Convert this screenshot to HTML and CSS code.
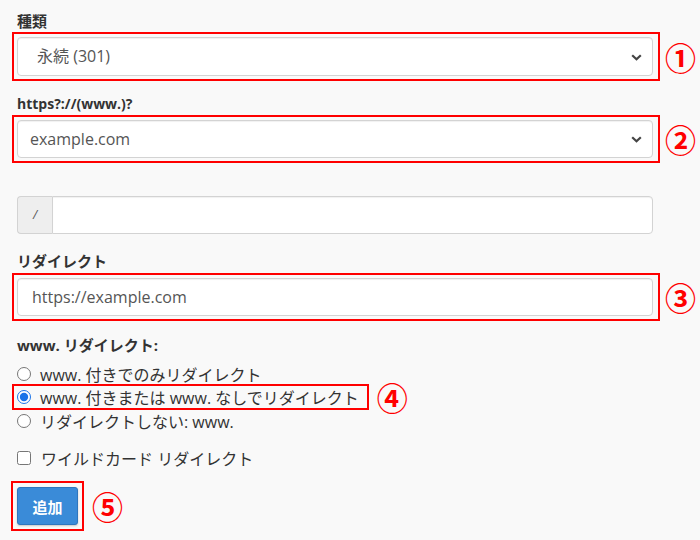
FILE: index.html
```html
<!DOCTYPE html>
<html lang="ja">
<head>
<meta charset="utf-8">
<title>リダイレクトの追加</title>
<link rel="stylesheet" href="styles.css">
</head>
<body>
<form class="form">
  <div class="group g-type">
    <div class="label">種類</div>
    <div class="row">
      <div class="ctrl mark">
        <div class="select sel-type">永続 (301)</div>
        <svg class="chev" width="11" height="7" viewBox="0 0 11 7"><path d="M1.2 1.2 L5.5 5.3 L9.8 1.2" fill="none" stroke="#444" stroke-width="2.2"/></svg>
      </div>
      <span class="num">①</span>
    </div>
  </div>

  <div class="group g-domain">
    <div class="label label-latin">https?://(www.)?</div>
    <div class="row">
      <div class="ctrl mark">
        <div class="select sel-domain">example.com</div>
        <svg class="chev" width="11" height="7" viewBox="0 0 11 7"><path d="M1.2 1.2 L5.5 5.3 L9.8 1.2" fill="none" stroke="#444" stroke-width="2.2"/></svg>
      </div>
      <span class="num">②</span>
    </div>
  </div>

  <div class="group g-path">
    <div class="ctrl input-group">
      <span class="addon">/</span>
      <div class="input input-right"></div>
    </div>
  </div>

  <div class="group g-redirect">
    <div class="label">リダイレクト</div>
    <div class="row">
      <div class="ctrl mark">
        <div class="input">https://example.com</div>
      </div>
      <span class="num">③</span>
    </div>
  </div>

  <div class="group g-www">
    <div class="label">www. リダイレクト:</div>
    <div class="radios">
      <label class="opt"><input type="radio" name="www"><span>www. 付きでのみリダイレクト</span></label>
      <div class="row row-radio">
        <label class="opt mark mark-radio"><input type="radio" name="www" checked><span>www. 付きまたは www. なしでリダイレクト</span></label>
        <span class="num num-radio">④</span>
      </div>
      <label class="opt"><input type="radio" name="www"><span>リダイレクトしない: www.</span></label>
    </div>
    <label class="opt opt-check"><input type="checkbox"><span>ワイルドカード リダイレクト</span></label>
  </div>

  <div class="row btn-row">
    <div class="mark mark-btn"><button type="button" class="btn">追加</button></div>
    <span class="num num-btn">⑤</span>
  </div>
</form>
</body>
</html>
```
FILE: styles.css
```css
html, body {
  margin: 0;
  padding: 0;
  background: #f9f9f9;
}
body {
  font-family: "Open Sans", "Noto Sans CJK JP", sans-serif;
  color: #333;
}
.form {
  padding: 11px 0 13px 17px;
}
.label {
  font-size: 15px;
  font-weight: 700;
  line-height: 20px;
  color: #333;
  margin-bottom: 6px;
}
.label-latin {
  font-size: 14px;
}
.g-type { margin-bottom: 18px; }
.g-domain { margin-bottom: 38px; }
.g-path { margin-bottom: 17px; }
.g-redirect { margin-bottom: 19px; }
.g-redirect .label { margin-bottom: 7px; }
.g-www { margin-bottom: 17px; }

.row {
  display: flex;
  align-items: center;
}
.ctrl {
  position: relative;
  width: 636px;
}
.mark {
  position: relative;
}
.mark::after {
  content: "";
  position: absolute;
  top: -5px;
  right: -7px;
  bottom: -5px;
  left: -5px;
  border: 2px solid #ff0000;
  pointer-events: none;
}
.num {
  margin-left: 12px;
  color: #ff0000;
  font-family: "Noto Sans CJK JP", sans-serif;
  font-size: 31px;
  font-weight: 700;
  line-height: 24px;
  height: 24px;
}
.select, .input {
  box-sizing: border-box;
  height: 38px;
  background: #fff;
  border: 1px solid #d3d3d3;
  border-radius: 4px;
  box-shadow: inset 0 1px 1px rgba(0,0,0,0.06);
  font-size: 16px;
  line-height: 36px;
  color: #555;
  padding: 0 12px;
}
.sel-type {
  height: 39px;
  line-height: 37px;
  padding-left: 19px;
}
.input {
  padding-left: 14px;
}
.chev {
  position: absolute;
  right: 11px;
  top: 50%;
  margin-top: -3px;
}
.input-group {
  display: flex;
}
.addon {
  box-sizing: border-box;
  width: 35px;
  height: 38px;
  background: #eee;
  border: 1px solid #d3d3d3;
  border-right: none;
  border-radius: 4px 0 0 4px;
  font-size: 12px;
  line-height: 36px;
  text-align: center;
  color: #555;
  font-style: italic;
}
.input-right {
  flex: 1;
  border-radius: 0 4px 4px 0;
}
.radios {
  margin-top: 7px;
}
.opt {
  display: flex;
  align-items: center;
  height: 23.5px;
  font-size: 16px;
  color: #333;
}
.opt input {
  margin: 0 9px 0 0;
  width: 14px;
  height: 14px;
  accent-color: #1a73e8;
}
.row-radio {
  height: 23.5px;
}
.mark-radio {
  width: max-content;
  padding-right: 2px;
}
.mark-radio::after {
  top: -2px;
  right: -8px;
  bottom: -1px;
  left: -5px;
}
.num-radio {
  margin-left: 16px;
}
.opt-check {
  margin-top: 14px;
}
.opt-check input {
  margin-right: 10px;
}
.btn-row {
  padding-bottom: 6px;
}
.mark-btn::after {
  top: -6px;
  right: -6px;
  bottom: -6px;
  left: -6px;
}
.btn {
  display: block;
  box-sizing: border-box;
  width: 61px;
  height: 38px;
  background: #3a8bd8;
  border: 1px solid #2f76bd;
  border-radius: 3px;
  box-shadow: 0 1px 2px rgba(0,0,0,0.2);
  color: #fff;
  font-family: "Open Sans", "Noto Sans CJK JP", sans-serif;
  font-size: 15px;
  font-weight: 700;
  padding: 0;
}
.num-btn {
  margin-left: 14px;
}
```
